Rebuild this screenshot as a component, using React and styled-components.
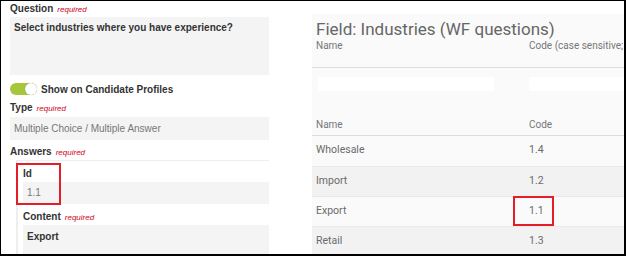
import styled, { createGlobalStyle } from 'styled-components'

const GlobalStyle = createGlobalStyle`
	html, body {
		margin: 0;
		padding: 0;
		background: #fff;
	}
	* {
		box-sizing: border-box;
	}
`

const Frame = styled.div`
	width: 626px;
	height: 256px;
	border: 1px solid #000;
	border-right-width: 2px;
	border-bottom-width: 2px;
	overflow: hidden;
	display: flex;
	align-items: flex-start;
	background: #fff;
	font-family: "Liberation Sans", Arial, sans-serif;
`

const LeftCol = styled.div`
	width: 268px;
	flex: none;
	padding-left: 9px;
	display: flex;
	flex-direction: column;

	& > * {
		flex-shrink: 0;
	}
`

const Label = styled.div`
	display: flex;
	align-items: baseline;
	height: 16px;
	line-height: 16px;
	margin-top: ${p => p.$gap || 0}px;
	font-size: 10px;
	font-weight: bold;
	color: #333;
`

const Required = styled.span`
	margin-left: 4px;
	font-size: 8px;
	font-style: italic;
	font-weight: normal;
	color: #d0021b;
`

const Field = styled.div`
	height: ${p => p.$h}px;
	margin-top: ${p => p.$gap || 0}px;
	padding: ${p => p.$pad || '0 4px'};
	background: #f4f4f4;
	font-size: 10px;
	line-height: ${p => p.$lh || 12}px;
	font-weight: ${p => (p.$bold ? 'bold' : 'normal')};
	color: ${p => (p.$bold ? '#333' : '#777')};
`

const ToggleRow = styled.div`
	display: flex;
	align-items: center;
	gap: 4px;
	height: 14px;
	margin-top: 7px;
	font-size: 10px;
	font-weight: bold;
	color: #333;
`

const Toggle = styled.div`
	position: relative;
	width: 27px;
	height: 12px;
	border-radius: 6px;
	background: #a6c73c;

	&::after {
		content: '';
		position: absolute;
		right: 0;
		top: 0;
		width: 12px;
		height: 12px;
		border-radius: 50%;
		background: #fff;
		box-shadow: 0 0 1px rgba(0,0,0,0.35);
	}
`

const AnswerItem = styled.div`
	position: relative;
	margin-left: 6px;
	padding: 5px 0 0 5px;
	border-top: 1px solid #eee;
	border-left: 2px solid #eee;
	display: flex;
	flex-direction: column;

	& > * {
		flex-shrink: 0;
	}
`

const RedBox = styled.div`
	position: absolute;
	left: ${p => p.$x}px;
	top: ${p => p.$y}px;
	width: ${p => p.$w}px;
	height: ${p => p.$h}px;
	border: 2px solid #e41e26;
	pointer-events: none;
`

const Panel = styled.div`
	flex: 1;
	align-self: stretch;
	margin: 13px 0 0 43px;
	padding-top: 6px;
	background: #fafafa;
	font-family: Roboto, "Liberation Sans", sans-serif;
	display: flex;
	flex-direction: column;

	& > * {
		flex-shrink: 0;
	}
`

const Title = styled.div`
	height: 18px;
	line-height: 18px;
	padding-left: 4px;
	font-size: 17px;
	color: #666;
	white-space: nowrap;
`

const Row = styled.div`
	display: flex;
	align-items: ${p => (p.$top ? 'flex-start' : 'center')};
	height: ${p => p.$h}px;
	padding-left: 4px;
	padding-bottom: ${p => (p.$line !== undefined ? 2 : 0)}px;
	background: ${p => (p.$shade ? '#f2f2f2' : 'transparent')};
	border-top: ${p => (p.$line ? '1px solid #e9e9e9' : 'none')};
	border-bottom: ${p => (p.$rule ? '1px solid #ddd' : 'none')};
	font-size: ${p => (p.$head ? 10 : 10.5)}px;
	line-height: 12px;
	color: ${p => (p.$head ? '#777' : '#6a6a6a')};
	white-space: nowrap;
`

const NameCell = styled.div`
	width: 213px;
	flex: none;
`

const CodeCell = styled.div`
	position: relative;
	flex: 1;
	height: 100%;
	display: flex;
	align-items: inherit;
`

const FilterInput = styled.div`
	height: 14px;
	margin-left: ${p => p.$inset || 0}px;
	width: ${p => p.$w ? p.$w + 'px' : '100%'};
	background: #fff;
`

const industries = [
	{ name: 'Wholesale', code: '1.4' },
	{ name: 'Import', code: '1.2' },
	{ name: 'Export', code: '1.1', marked: true },
	{ name: 'Retail', code: '1.3' },
]

function App() {
	return (
		<>
			<GlobalStyle />
			<Frame>
				<LeftCol>
					<Label>Question<Required>required</Required></Label>
					<Field $h={58} $bold $pad="5px 4px">Select industries where you have experience?</Field>
					<ToggleRow>
						<Toggle />
						Show on Candidate Profiles
					</ToggleRow>
					<Label $gap={4}>Type<Required>required</Required></Label>
					<Field $h={23} $gap={1} $lh={23}>Multiple Choice / Multiple Answer</Field>
					<Label $gap={4}>Answers<Required>required</Required></Label>
					<AnswerItem>
						<RedBox $x={-2} $y={2} $w={45} $h={42} />
						<Label>Id</Label>
						<Field $h={22} $lh={22}>1.1</Field>
						<Label $gap={5}>Content<Required>required</Required></Label>
						<Field $h={40} $bold $pad="6px 4px">Export</Field>
					</AnswerItem>
				</LeftCol>

				<Panel>
					<Title>Field: Industries (WF questions)</Title>
					<Row $h={30} $top $head $rule>
						<NameCell style={{ paddingTop: 2 }}>Name</NameCell>
						<CodeCell style={{ paddingTop: 2 }}>Code (case sensitive;</CodeCell>
					</Row>
					<Row $h={46} $top>
						<NameCell style={{ paddingTop: 9 }}>
							<FilterInput $inset={2} $w={176} />
						</NameCell>
						<CodeCell style={{ paddingTop: 9 }}>
							<FilterInput />
						</CodeCell>
					</Row>
					<Row $h={22} $head $rule>
						<NameCell>Name</NameCell>
						<CodeCell>Code</CodeCell>
					</Row>
					{industries.map((item, i) => (
						<Row key={item.name} $h={30} $shade={i % 2 === 1} $line={i > 0}>
							<NameCell>{item.name}</NameCell>
							<CodeCell>
								{item.code}
								{item.marked && <RedBox $x={-16} $y={-1} $w={41} $h={30} />}
							</CodeCell>
						</Row>
					))}
				</Panel>
			</Frame>
		</>
	)
}

export default App
